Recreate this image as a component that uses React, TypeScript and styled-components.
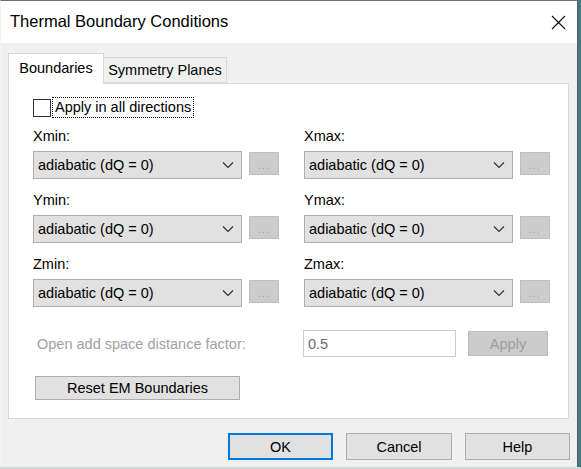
import React, { useState } from 'react';
import styled, { createGlobalStyle } from 'styled-components';

const GlobalStyle = createGlobalStyle`
  html, body {
    margin: 0;
    padding: 0;
    background: #3f7c82;
  }
  body {
    font-family: 'Liberation Sans', Arial, sans-serif;
    font-size: 14.5px;
    color: #000;
  }
`;

const Page = styled.div`
  width: 581px;
  height: 469px;
  background: #3f7c82;
  border-bottom: 2px solid #cfd8d5;
  box-sizing: border-box;
`;

const Window = styled.div`
  width: 578px;
  height: 467px;
  box-sizing: border-box;
  border-top: 1px solid #6e6e6e;
  border-right: 1px solid #5c5c5c;
  border-left: 1px solid #f4f4f4;
  background: #f0f0f0;
  display: flex;
  flex-direction: column;
`;

const TitleBar = styled.div`
  height: 42px;
  background: #fff;
  display: flex;
  align-items: center;
  justify-content: space-between;
  padding-left: 9px;
`;

const Title = styled.div`
  font-size: 16.5px;
  padding-bottom: 2px;
`;

const CloseButton = styled.div`
  width: 46px;
  height: 42px;
  display: flex;
  align-items: center;
  justify-content: center;
  margin-right: -4px;
`;

const Body = styled.div`
  flex: 1;
  padding: 10px 8px 0 7px;
  display: flex;
  flex-direction: column;
`;

const Tabs = styled.div`
  display: flex;
  align-items: flex-end;
  height: 30px;
`;

const Tab = styled.div<{ $active?: boolean }>`
  box-sizing: border-box;
  height: ${(p) => (p.$active ? '31px' : '26px')};
  margin-bottom: ${(p) => (p.$active ? '-1px' : '0')};
  border: 1px solid #d9d9d9;
  border-bottom: ${(p) => (p.$active ? 'none' : '1px solid #d9d9d9')};
  border-left: ${(p) => (p.$active ? '1px solid #d9d9d9' : 'none')};
  background: ${(p) => (p.$active ? '#fff' : '#f0f0f0')};
  display: flex;
  align-items: center;
  justify-content: center;
  white-space: nowrap;
  position: relative;
  z-index: ${(p) => (p.$active ? 1 : 0)};
  width: ${(p) => (p.$active ? '96px' : '123px')};
  padding-bottom: ${(p) => (p.$active ? '3px' : '0')};
`;

const Panel = styled.div`
  box-sizing: border-box;
  height: 336px;
  width: 561px;
  background: #fff;
  border: 1px solid #d9d9d9;
  padding: 14px 0 0 24px;
  display: flex;
  flex-direction: column;
`;

const CheckRow = styled.label`
  display: flex;
  align-items: center;
  height: 19px;
`;

const CheckBox = styled.span`
  box-sizing: border-box;
  width: 18px;
  height: 18px;
  border: 1px solid #333;
  background: #fff;
`;

const FocusLabel = styled.span`
  margin-left: 2px;
  padding: 0 2px;
  height: 19px;
  line-height: 19px;
  outline: 1px dotted #000;
`;

const FieldGrid = styled.div`
  margin-top: 11px;
  display: grid;
  grid-template-columns: 246px 246px;
  column-gap: 25px;
  row-gap: 13px;
`;

const Field = styled.div`
  display: flex;
  flex-direction: column;
  gap: 3px;
`;

const FieldLabel = styled.div`
  height: 20px;
  line-height: 16px;
`;

const ComboRow = styled.div`
  display: flex;
  align-items: flex-start;
  gap: 7px;
`;

const Combo = styled.div`
  box-sizing: border-box;
  width: 209px;
  height: 28px;
  background: #e1e1e1;
  border: 1px solid #adadad;
  display: flex;
  align-items: center;
  justify-content: space-between;
  padding: 0 7px 0 4px;
`;

const DisabledButton = styled.div<{ $w: number; $h: number }>`
  box-sizing: border-box;
  width: ${(p) => p.$w}px;
  height: ${(p) => p.$h}px;
  background: #cccccc;
  border: 1px solid #bfbfbf;
  color: #9d9d9d;
  display: flex;
  align-items: center;
  justify-content: center;
`;

const Dots = styled(DisabledButton)`
  margin-top: 1px;
  align-items: flex-end;
  font-size: 10px;
  letter-spacing: 1px;
  padding-bottom: 3px;
`;

const FactorRow = styled.div`
  margin-top: 23px;
  display: flex;
  align-items: center;
`;

const FactorLabel = styled.div`
  width: 266px;
  padding-left: 4px;
  color: #a0a0a0;
`;

const FactorInput = styled.div`
  box-sizing: border-box;
  width: 153px;
  height: 27px;
  border: 1px solid #cccccc;
  background: #fff;
  color: #6d6d6d;
  display: flex;
  align-items: center;
  padding-left: 4px;
  margin-right: 12px;
`;

const PushButton = styled.button<{ $w: number; $default?: boolean }>`
  box-sizing: border-box;
  width: ${(p) => p.$w}px;
  background: #e1e1e1;
  border: ${(p) => (p.$default ? '2px solid #0078d7' : '1px solid #adadad')};
  font-family: inherit;
  font-size: 14.5px;
  color: #000;
  padding: 0;
`;

const ResetButton = styled(PushButton)`
  margin: 19px 0 0 2px;
  height: 24px;
`;

const Footer = styled.div`
  display: flex;
  justify-content: flex-end;
  gap: 13px;
  margin: 14px -1px 0 0;
`;

const FooterButton = styled(PushButton)`
  height: 27px;
`;

const Chevron = () => (
  <svg width="12" height="8" viewBox="0 0 12 8">
    <path d="M1 1.5 L6 6.5 L11 1.5" fill="none" stroke="#333" strokeWidth="1.2" />
  </svg>
);

const fields = ['Xmin', 'Xmax', 'Ymin', 'Ymax', 'Zmin', 'Zmax'];

const App = () => {
  const [applyAll] = useState(false);

  return (
    <Page>
      <GlobalStyle />
      <Window>
        <TitleBar>
          <Title>Thermal Boundary Conditions</Title>
          <CloseButton>
            <svg width="15" height="15" viewBox="0 0 15 15">
              <path d="M1 1 L14 14 M14 1 L1 14" stroke="#111" strokeWidth="1.1" fill="none" />
            </svg>
          </CloseButton>
        </TitleBar>
        <Body>
          <Tabs>
            <Tab $active>Boundaries</Tab>
            <Tab>Symmetry Planes</Tab>
          </Tabs>
          <Panel>
            <CheckRow>
              <CheckBox>{applyAll ? '✓' : ''}</CheckBox>
              <FocusLabel>Apply in all directions</FocusLabel>
            </CheckRow>
            <FieldGrid>
              {fields.map((f) => (
                <Field key={f}>
                  <FieldLabel>{f}:</FieldLabel>
                  <ComboRow>
                    <Combo>
                      <span>adiabatic (dQ = 0)</span>
                      <Chevron />
                    </Combo>
                    <Dots $w={30} $h={23}>...</Dots>
                  </ComboRow>
                </Field>
              ))}
            </FieldGrid>
            <FactorRow>
              <FactorLabel>Open add space distance factor:</FactorLabel>
              <FactorInput>0.5</FactorInput>
              <DisabledButton $w={80} $h={25}>Apply</DisabledButton>
            </FactorRow>
            <ResetButton $w={205}>Reset EM Boundaries</ResetButton>
          </Panel>
          <Footer>
            <FooterButton $w={105} $default>OK</FooterButton>
            <FooterButton $w={106}>Cancel</FooterButton>
            <FooterButton $w={105}>Help</FooterButton>
          </Footer>
        </Body>
      </Window>
    </Page>
  );
};

export default App;
